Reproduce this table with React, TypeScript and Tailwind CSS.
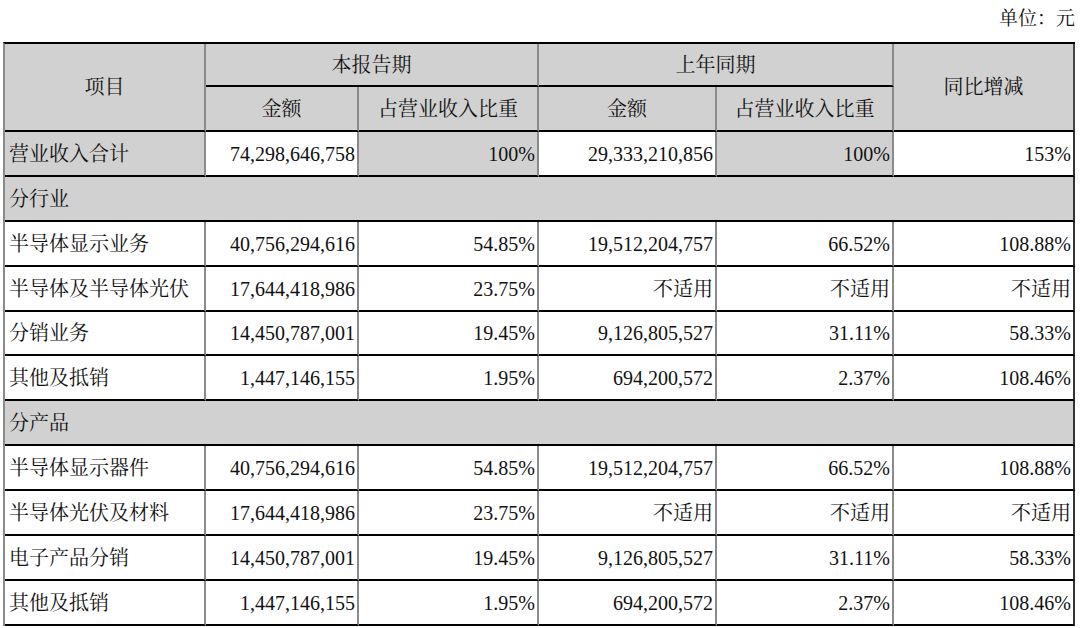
import React from "react";

type Row =
  | { kind: "section"; label: string; h: string }
  | { kind: "data"; label: string; cells: string[]; h: string };

const rows: Row[] = [
  { kind: "section", label: "分行业", h: "h-[45px]" },
  { kind: "data", label: "半导体显示业务", cells: ["40,756,294,616", "54.85%", "19,512,204,757", "66.52%", "108.88%"], h: "h-[45px]" },
  { kind: "data", label: "半导体及半导体光伏", cells: ["17,644,418,986", "23.75%", "不适用", "不适用", "不适用"], h: "h-[45px]" },
  { kind: "data", label: "分销业务", cells: ["14,450,787,001", "19.45%", "9,126,805,527", "31.11%", "58.33%"], h: "h-[44px]" },
  { kind: "data", label: "其他及抵销", cells: ["1,447,146,155", "1.95%", "694,200,572", "2.37%", "108.46%"], h: "h-[45px]" },
  { kind: "section", label: "分产品", h: "h-[45px]" },
  { kind: "data", label: "半导体显示器件", cells: ["40,756,294,616", "54.85%", "19,512,204,757", "66.52%", "108.88%"], h: "h-[45px]" },
  { kind: "data", label: "半导体光伏及材料", cells: ["17,644,418,986", "23.75%", "不适用", "不适用", "不适用"], h: "h-[45px]" },
  { kind: "data", label: "电子产品分销", cells: ["14,450,787,001", "19.45%", "9,126,805,527", "31.11%", "58.33%"], h: "h-[45px]" },
  { kind: "data", label: "其他及抵销", cells: ["1,447,146,155", "1.95%", "694,200,572", "2.37%", "108.46%"], h: "h-[45px]" },
];

const font = {
  fontFamily: '"Liberation Serif", "Noto Serif CJK SC", "Noto Sans CJK SC", serif',
};

const cell = "border-b-2 border-r-2 border-b-black border-r-[#8a8a8a] px-[2px] whitespace-nowrap";
const gray = "bg-[#d1d1d1]";

export default function App() {
  return (
    <div className="w-[1080px] h-[628px] overflow-hidden bg-white text-[#111] pl-[3px] pr-[7px]" style={font}>
      <div className="h-[42px] pt-[6px] text-right text-[19px] leading-[26px] -mr-[2px]">单位：元</div>
      <table className="table-fixed w-[1070px] border-separate border-spacing-0 border-t-2 border-l-2 border-t-black border-l-[#8a8a8a] text-[20px] leading-[24px]">
        <colgroup>
          <col className="w-[201px]" />
          <col className="w-[153px]" />
          <col className="w-[180px]" />
          <col className="w-[178px]" />
          <col className="w-[177px]" />
          <col className="w-[181px]" />
        </colgroup>
        <thead>
          <tr className="h-[43px]">
            <th rowSpan={2} className={`${cell} ${gray} font-normal text-center`}>项目</th>
            <th colSpan={2} className={`${cell} ${gray} font-normal text-center`}>本报告期</th>
            <th colSpan={2} className={`${cell} ${gray} font-normal text-center`}>上年同期</th>
            <th rowSpan={2} className={`${cell} ${gray} font-normal text-center border-r-[#444]`}>同比增减</th>
          </tr>
          <tr className="h-[45px]">
            <th className={`${cell} ${gray} font-normal text-center`}>金额</th>
            <th className={`${cell} ${gray} font-normal text-center`}>占营业收入比重</th>
            <th className={`${cell} ${gray} font-normal text-center`}>金额</th>
            <th className={`${cell} ${gray} font-normal text-center`}>占营业收入比重</th>
          </tr>
        </thead>
        <tbody>
          <tr className="h-[45px]">
            <td className={`${cell} ${gray} text-left pl-[4px]`}>营业收入合计</td>
            <td className={`${cell} bg-white text-right`}>74,298,646,758</td>
            <td className={`${cell} ${gray} text-right`}>100%</td>
            <td className={`${cell} bg-white text-right`}>29,333,210,856</td>
            <td className={`${cell} ${gray} text-right`}>100%</td>
            <td className={`${cell} bg-white text-right border-r-[#333]`}>153%</td>
          </tr>
          {rows.map((r, i) =>
            r.kind === "section" ? (
              <tr key={i} className={r.h}>
                <td colSpan={6} className={`${cell} ${gray} text-left pl-[4px] border-r-[#333]`}>
                  {r.label}
                </td>
              </tr>
            ) : (
              <tr key={i} className={r.h}>
                <td className={`${cell} text-left pl-[4px]`}>{r.label}</td>
                {r.cells.map((c, j) => (
                  <td key={j} className={`${cell} text-right ${j === 4 ? "border-r-[#333]" : ""}`}>
                    {c}
                  </td>
                ))}
              </tr>
            )
          )}
        </tbody>
      </table>
    </div>
  );
}
